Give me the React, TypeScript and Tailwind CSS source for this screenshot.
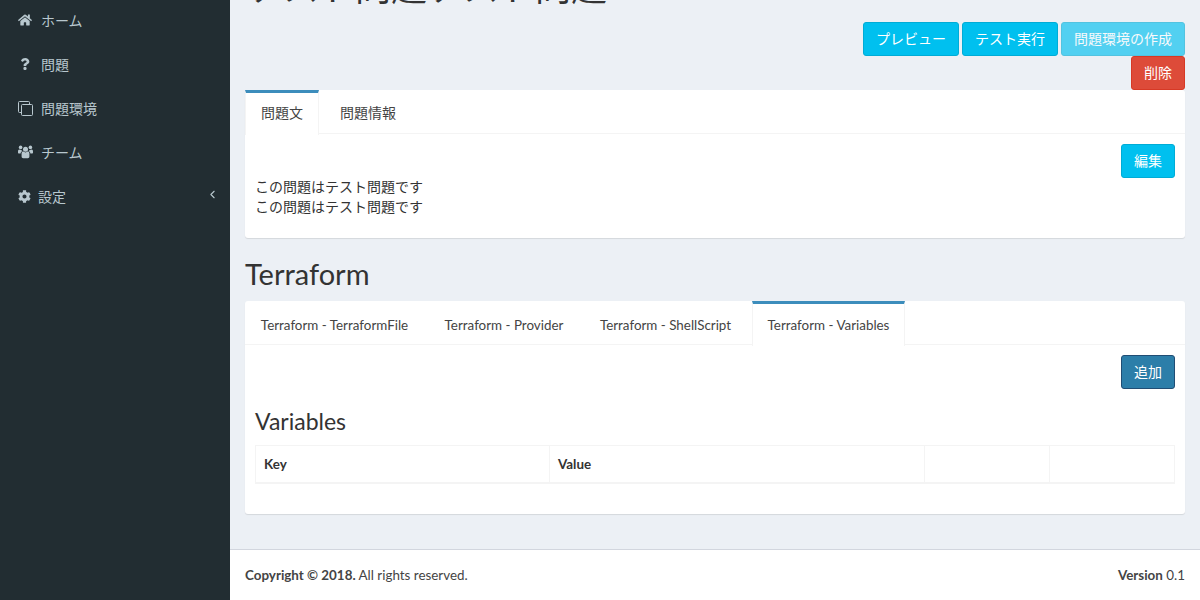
import { FaHome, FaQuestion, FaCog } from 'react-icons/fa'
import { ChevronLeft } from 'lucide-react'
import type { ReactNode } from 'react'

const font = "font-['Lato','Noto_Sans_CJK_JP',sans-serif]"

function CopyIcon() {
  return (
    <svg width="15" height="15" viewBox="0 0 15 15" fill="none" stroke="currentColor" strokeWidth="1" className="shrink-0">
      <path d="M3 11.5H1.5a1 1 0 0 1-1-1V1.5a1 1 0 0 1 1-1h9a1 1 0 0 1 1 1V3" />
      <rect x="3.5" y="3.5" width="11" height="11" rx="1" />
    </svg>
  )
}

function UsersIcon() {
  return (
    <svg width="15" height="14" viewBox="0 0 15 14" fill="currentColor" className="shrink-0">
      <circle cx="7.5" cy="4.2" r="2.5" />
      <circle cx="2.6" cy="2.4" r="1.8" />
      <circle cx="12.4" cy="2.4" r="1.8" />
      <path d="M3.6 8.4C3.6 6.9 4.6 6.6 5.4 6.6c.6.5 1.3.8 2.1.8s1.5-.3 2.1-.8c.8 0 1.8.3 1.8 1.8v3.2c0 1-.7 1.6-1.6 1.6H5.2c-.9 0-1.6-.6-1.6-1.6V8.4z" />
      <path d="M0 6.6C0 5.3.5 4.6 1.4 4.6c.4.3.8.5 1.3.5.3 0 .6-.1.8-.2.1.6.4 1.1.8 1.4-.9.3-1.6 1-1.7 2.2H1C.4 8.5 0 8 0 7.4v-.8z" />
      <path d="M15 6.6c0-1.3-.5-2-1.4-2-.4.3-.8.5-1.3.5-.3 0-.6-.1-.8-.2-.1.6-.4 1.1-.8 1.4.9.3 1.6 1 1.7 2.2H14c.6 0 1-.5 1-1.1v-.8z" />
    </svg>
  )
}

function NavItem({ icon, label, gap, right }: { icon: ReactNode; label: string; gap: string; right?: boolean }) {
  return (
    <div className="flex items-center h-11 pl-[18px] pr-[11px] text-[14px] text-[#b8c7ce]">
      <span className={`flex items-center shrink-0 ${gap}`}>{icon}</span>
      <span className="flex-1">{label}</span>
      {right && <ChevronLeft size={13} strokeWidth={2} className="-mt-[3px]" />}
    </div>
  )
}

function Btn({ label, className }: { label: string; className: string }) {
  return (
    <button className={`h-[34px] px-3 pb-[2px] rounded-[3px] border text-[14px] text-white ${className}`}>{label}</button>
  )
}

function Tab({ label, active, width, latin }: { label: string; active?: boolean; width: string; latin?: boolean }) {
  const inactivePad = latin ? 'pt-[4px]' : ''
  const activePad = latin ? 'pt-[1px]' : 'pb-[3px]'
  return (
    <div
      className={`${width} mr-[5px] flex items-center justify-center text-[#444] ${
        active
          ? `border-t-[3px] border-t-[#3c8dbc] border-r border-l border-[#f4f4f4] bg-white -mb-px h-[45px] ${activePad}`
          : `h-[44px] ${inactivePad}`
      }`}
    >
      {label}
    </div>
  )
}

export default function App() {
  return (
    <div className={`${font} flex w-[1200px] h-[600px] overflow-hidden bg-[#ecf0f5] text-[#333]`}>
      <aside className="w-[230px] shrink-0 bg-[#222d32] -mt-[3px] pt-[1px]">
        <NavItem icon={<FaHome className="text-[14px]" />} label="ホーム" gap="w-[23px]" />
        <NavItem icon={<FaQuestion className="text-[12px] ml-[1px]" />} label="問題" gap="w-[23px]" />
        <NavItem icon={<CopyIcon />} label="問題環境" gap="w-[23px]" />
        <NavItem icon={<UsersIcon />} label="チーム" gap="w-[23px]" />
        <NavItem icon={<FaCog className="text-[13px]" />} label="設定" gap="w-[20px]" right />
      </aside>

      <div className="flex-1 flex flex-col min-w-0">
        <main className="flex-1 px-[15px] min-h-0">
          <h1 className="text-[36px] leading-[40px] -mt-[33px] ml-[2px] h-[40px] whitespace-nowrap">テスト問題テスト問題</h1>

          <div className="flex flex-wrap justify-end gap-x-[3px] mt-[15px]">
            <Btn label="プレビュー" className="bg-[#00c0ef] border-[#00acd6]" />
            <Btn label="テスト実行" className="bg-[#00c0ef] border-[#00acd6]" />
            <Btn label="問題環境の作成" className="bg-[#00c0ef] border-[#00acd6] opacity-65" />
            <div className="w-full flex justify-end">
              <Btn label="削除" className="bg-[#dd4b39] border-[#d73925]" />
            </div>
          </div>

          <section className="bg-white rounded-[3px] shadow-[0_1px_1px_rgba(0,0,0,0.1)] h-[148px]">
            <div className="flex border-b border-[#f4f4f4] h-[44px] text-[14px]">
              <Tab label="問題文" active width="w-[74px]" />
              <Tab label="問題情報" width="w-[88px]" />
            </div>
            <div className="px-[10px] pt-[10px]">
              <div className="flex justify-end">
                <Btn label="編集" className="bg-[#00c0ef] border-[#00acd6]" />
              </div>
              <p className="text-[14px] leading-[20px] -mt-px">この問題はテスト問題です</p>
              <p className="text-[14px] leading-[20px]">この問題はテスト問題です</p>
            </div>
          </section>

          <h2 className="text-[29px] leading-[33px] mt-[19px] mb-[11px]">Terraform</h2>

          <section className="bg-white rounded-[3px] shadow-[0_1px_1px_rgba(0,0,0,0.1)] h-[213px]">
            <div className="flex border-b border-[#f4f4f4] h-[44px] text-[13.4px]">
              <Tab label="Terraform - TerraformFile" latin width="w-[179px]" />
              <Tab label="Terraform - Provider" latin width="w-[150px]" />
              <Tab label="Terraform - ShellScript" latin width="w-[163px]" />
              <Tab label="Terraform - Variables" latin active width="w-[153px]" />
            </div>
            <div className="px-[10px] pt-[10px]">
              <div className="flex justify-end">
                <Btn label="追加" className="bg-[#2c7ea9] border-[#204d74]" />
              </div>
              <h3 className="text-[23px] leading-[26px] mt-[19px] mb-[11px]">Variables</h3>
              <table className="w-full table-fixed border border-[#f4f4f4] border-b-2 text-[13.4px]">
                <thead>
                  <tr className="h-[37px] text-left">
                    <th className="w-[294px] px-2 font-bold">Key</th>
                    <th className="w-[375px] px-2 font-bold border-l border-[#f4f4f4]">Value</th>
                    <th className="w-[125px] border-l border-[#f4f4f4]"></th>
                    <th className="border-l border-[#f4f4f4]"></th>
                  </tr>
                </thead>
              </table>
            </div>
          </section>
        </main>

        <footer className="h-[51px] shrink-0 bg-white border-t border-[#d2d6de] px-[15px] flex items-center justify-between text-[13.4px] text-[#444]">
          <div>
            <strong>Copyright © 2018.</strong> All rights reserved.
          </div>
          <div>
            <strong>Version</strong> 0.1
          </div>
        </footer>
      </div>
    </div>
  )
}
